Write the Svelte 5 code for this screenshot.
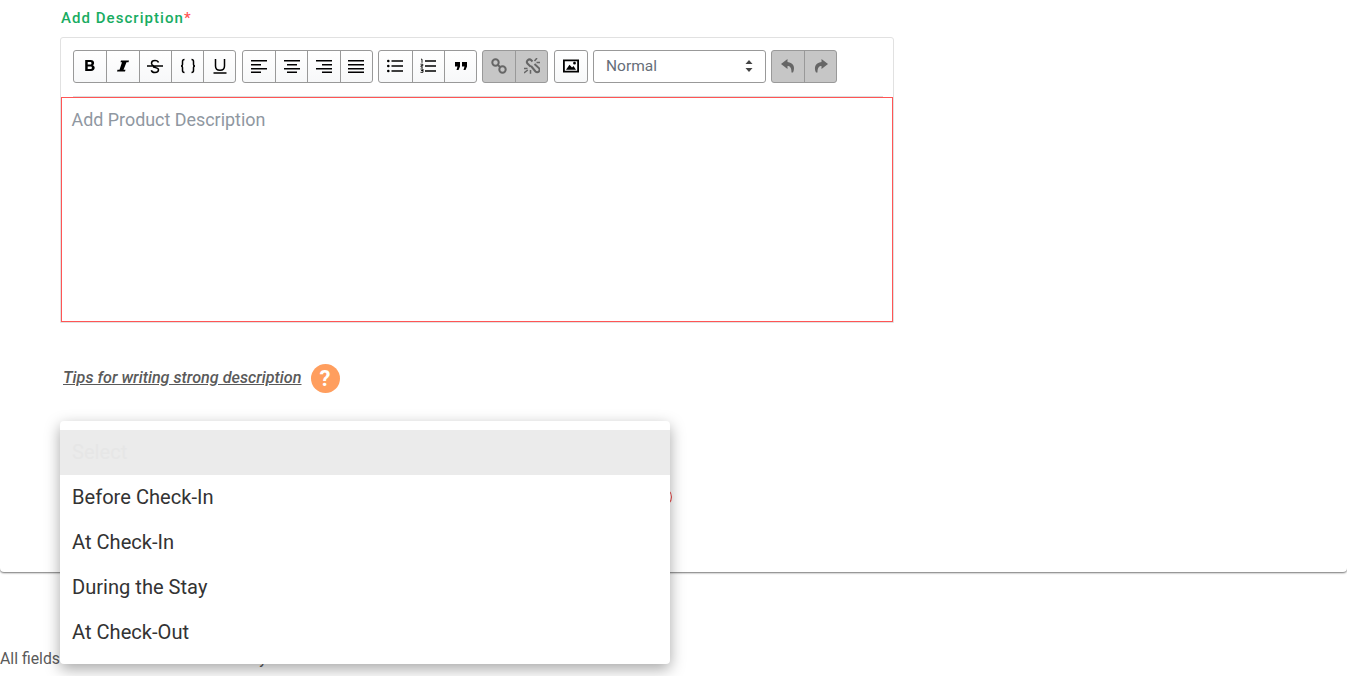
<script>
  const options = ['Before Check-In', 'At Check-In', 'During the Stay', 'At Check-Out'];
</script>

<div class="page">
  <section class="card">
    <div class="label">Add Description<span class="req">*</span></div>
    <div class="wrapper">
      <div class="toolbar">
        <div class="group">
          <button class="btn"><svg viewBox="0 0 16 16"><path d="M3.200 2h5.400c2.200 0 3.500 1 3.500 2.900 0 1.100-.6 1.900-1.500 2.300 1.300.3 2.100 1.300 2.100 2.600 0 2-1.500 3.200-3.700 3.200H3.200zm2.500 2v2.500h2.500c.8 0 1.300-.5 1.300-1.300S9 4 8.200 4zm0 4.400V11h2.800c.9 0 1.400-.5 1.400-1.300s-.5-1.300-1.400-1.300z" fill-rule="evenodd"/></svg></button>
          <button class="btn"><svg viewBox="0 0 16 16"><path d="M6 2.500h8l-.5 1.800h-2L8.500 11.700h2l-.5 1.800H2l.5-1.800h2L7 4.300H5.500z"/></svg></button>
          <button class="btn"><svg viewBox="0 0 16 16"><path class="line" stroke-width="1.200" d="M0 8h16M11.500 4.500C11 3 9.700 2.500 8 2.500c-2 0-3.500 1-3.500 2.700 0 1.300.8 2.200 2.500 2.800M6 9c3 .6 5.500 1 5.500 2.800 0 1.700-1.500 2.700-3.500 2.700-2 0-3.300-.8-3.700-2.300"/></svg></button>
          <button class="btn"><svg viewBox="0 0 16 16"><path class="line" d="M4.500 1.500C3 1.500 2.500 2 2.500 3.500V6.500c0 1-.5 1.500-1.500 1.500 1 0 1.500.5 1.500 1.500v3c0 1.500.5 2 2 2M11.500 1.500c1.500 0 2 .5 2 2v3c0 1 .5 1.500 1.500 1.500-1 0-1.500.5-1.500 1.500v3c0 1.500-.5 2-2 2"/></svg></button>
          <button class="btn"><svg viewBox="0 0 16 16"><path class="line" d="M1.500 15h13M3.500 1v7c0 2.800 1.700 4.300 4.500 4.300s4.500-1.500 4.500-4.300V1"/></svg></button>
        </div>
        <div class="group">
          <button class="btn"><svg viewBox="0 0 16 16"><path d="M0 2h16v1.500H0zM0 6h10v1.500H0zM0 10h16v1.500H0zM0 13.500h10V15H0z"/></svg></button>
          <button class="btn"><svg viewBox="0 0 16 16"><path d="M0 2h16v1.500H0zM3 6h10v1.500H3zM0 10h16v1.500H0zM3 13.500h10V15H3z"/></svg></button>
          <button class="btn"><svg viewBox="0 0 16 16"><path d="M0 2h16v1.500H0zM6 6h10v1.500H6zM0 10h16v1.500H0zM6 13.500h10V15H6z"/></svg></button>
          <button class="btn"><svg viewBox="0 0 16 16"><path d="M0 2h16v1.500H0zM0 6h16v1.500H0zM0 10h16v1.500H0zM0 13.500h16V15H0z"/></svg></button>
        </div>
        <div class="group">
          <button class="btn"><svg viewBox="0 0 16 16"><path d="M4.500 2.300H16v1.500H4.500zM4.500 7.300H16v1.500H4.500zM4.500 12.300H16v1.500H4.500z"/><circle cx="1.300" cy="3" r="1.300"/><circle cx="1.300" cy="8" r="1.300"/><circle cx="1.300" cy="13" r="1.300"/></svg></button>
          <button class="btn"><svg viewBox="0 0 16 16"><path d="M5 2.300H16v1.500H5zM5 7.300H16v1.500H5zM5 12.300H16v1.500H5z"/><path class="thin" d="M1 1.200h1V4.800M0.500 6.200h2.300v1.500H1v1.400h2M0.500 11h2.500v1.500H1.300 3v1.800H0.500"/></svg></button>
          <button class="btn"><svg viewBox="0 0 16 16"><path d="M2 4h5v4.500L5.500 12h-2l1-3.500H2zM9 4h5v4.500L12.500 12h-2l1-3.500H9z"/></svg></button>
        </div>
        <div class="group off">
          <button class="btn narrow"><svg viewBox="0 0 16 16"><g class="line heavy"><circle cx="4.500" cy="4.500" r="3.200"/><circle cx="11.500" cy="11.500" r="3.200"/><path d="M6.500 6.500l3 3"/></g></svg></button>
          <button class="btn narrow"><svg viewBox="0 0 16 16"><g class="line heavy"><path d="M8.500 3.500 7.300 2.300C6.300 1.300 4.700 1.300 3.700 2.300S2.700 4.800 3.700 5.800L6.500 8.500M7 8l4.500 5.500c1 1 2.500 1 3.400 0s.9-2.400 0-3.400L10.500 6"/></g><path class="line" stroke-width="1" d="M13 0l-2.500 3M16 4.500h-3.500M0 10.500h3.500M0 15l3.800-3M6.500 12v3.800"/></svg></button>
        </div>
        <div class="group">
          <button class="btn narrow"><svg viewBox="0 0 16 16"><path fill-rule="evenodd" d="M0 1.500h16v13H0zm1.800 1.800v9.400h12.400V3.300zM3 11.800l3.500-5 2.500 2.700L10.500 8l2.500 3.800zM11.500 3.800a1.400 1.400 0 1 1 0 2.800 1.400 1.400 0 0 1 0-2.800z"/></svg></button>
        </div>
        <div class="select">
          <span>Normal</span>
          <svg viewBox="0 0 8 14"><path d="M4 1 7.500 5h-7zM4 13 .5 9h7z"/></svg>
        </div>
        <div class="group off">
          <button class="btn"><svg viewBox="0 0 16 16"><path class="ghost" d="M7.500 1 1 6l6.500 5V8c2.500 0 4 1.500 4 6.500h1.500c2.500-5 .5-10-5.500-10.500z"/></svg></button>
          <button class="btn"><svg viewBox="0 0 16 16"><path class="ghost" d="M8.500 1 15 6l-6.500 5V8c-2.500 0-4 1.500-4 6.500H3C.5 9.500 2.500 4.500 8.500 4z"/></svg></button>
        </div>
      </div>
      <div class="editor">Add Product Description</div>
    </div>

    <div class="tips">
      <span class="tips-text">Tips for writing strong description</span>
      <span class="help">?</span>
    </div>

    <div class="field">
      <div class="ghost-ring"></div>
      <div class="menu">
        <div class="opt selected">Select</div>
        {#each options as o}
          <div class="opt">{o}</div>
        {/each}
      </div>
    </div>
  </section>

  <p class="note">All fields marked with * are mandatory</p>
</div>

<style>
  :global(body) {
    margin: 0;
    background: #fff;
    overflow: hidden;
  }
  .page {
    height: 676px;
    overflow: hidden;
    font-family: Roboto, "Liberation Sans", sans-serif;
  }
  .card {
    height: 572px;
    box-sizing: border-box;
    padding: 9px 0 0 60px;
    border-radius: 0 0 4px 4px;
    box-shadow: 0 1px 2px rgba(0, 0, 0, 0.55);
  }
  .label {
    height: 28px;
    margin-left: 1px;
    font-size: 15px;
    line-height: 18px;
    letter-spacing: 1.050px;
    font-weight: 500;
    color: #18ac62;
  }
  .req { color: #f55; letter-spacing: 0; }
  .wrapper {
    width: 834px;
    box-sizing: border-box;
    border: 1px solid #e1e1e1;
    border-radius: 3px 3px 0 0;
  }
  .toolbar {
    display: flex;
    gap: 5.300px;
    margin: 0 10px 0 12px;
    padding: 12px 0 13px;
    border-bottom: 1px solid #ddd;
  }
  .group {
    display: flex;
    height: 33px;
    box-sizing: border-box;
    border: 1px solid #999;
    border-radius: 3px;
    background: linear-gradient(#fff, #f7f8f9);
  }
  .btn {
    all: unset;
    width: 32.300px;
    box-sizing: border-box;
    display: flex;
    align-items: center;
    justify-content: center;
    border-left: 1px solid #999;
    padding-bottom: 1px;
  }
  .btn.narrow { width: 32px; }
  .btn:first-child { border-left: 0; }
  .btn svg { width: 16px; height: 16px; fill: #000; }
  .group.off { background: #c6c6c6; }
  .off svg { fill: #666; }
  .off .line { stroke: #666; }
  .line { fill: none; stroke: #000; stroke-width: 1.500; }
  .heavy { stroke-width: 2; }
  .thin { fill: none; stroke: #000; stroke-width: 0.900; }
  .ghost { fill: #666; }
  .select {
    width: 172.500px;
    height: 33px;
    box-sizing: border-box;
    border: 1px solid #999;
    border-radius: 3px;
    display: flex;
    align-items: center;
    justify-content: space-between;
    padding: 0 12px 2px 12px;
    font-size: 15.500px;
    color: #666e78;
  }
  .select svg { width: 8px; height: 14px; fill: #444; }
  .editor {
    height: 225px;
    box-sizing: border-box;
    border: 1px solid #f55;
    padding: 11px 9.500px;
    font-size: 17.900px;
    line-height: 22px;
    color: #8f97a1;
  }
  .tips {
    display: flex;
    align-items: center;
    gap: 9px;
    margin: 41px 0 0 3px;
    height: 29px;
  }
  .tips-text {
    font-size: 16.200px;
    font-style: italic;
    font-weight: 500;
    color: #5a5a5a;
    text-decoration: underline;
    padding-bottom: 2px;
  }
  .help {
    width: 29px;
    height: 29px;
    border-radius: 50%;
    background: #ff9e5e;
    color: #fff;
    font-weight: 700;
    font-size: 22px;
    display: flex;
    align-items: center;
    justify-content: center;
  }
  .field {
    position: relative;
    margin-top: 28px;
  }
  .ghost-ring {
    position: absolute;
    left: 598px;
    top: 66px;
    width: 14px;
    height: 20px;
    box-sizing: border-box;
    border: 1.500px solid #e44;
    border-left: 0;
    border-radius: 0 10px 10px 0;
  }
  .menu {
    position: absolute;
    left: 0;
    top: 0;
    width: 610px;
    height: 243px;
    box-sizing: border-box;
    padding-top: 9px;
    background: #fff;
    border-radius: 4px;
    box-shadow: 0 5px 15px rgba(0, 0, 0, 0.35);
  }
  .opt {
    height: 45px;
    line-height: 45px;
    padding-left: 12px;
    font-size: 20.100px;
    color: #333;
  }
  .selected {
    background: #ebebeb;
    color: #e6e6e6;
  }
  .note {
    margin: 78px 0 0;
    font-size: 15.800px;
    line-height: 18px;
    color: #5a5a5a;
  }
</style>
